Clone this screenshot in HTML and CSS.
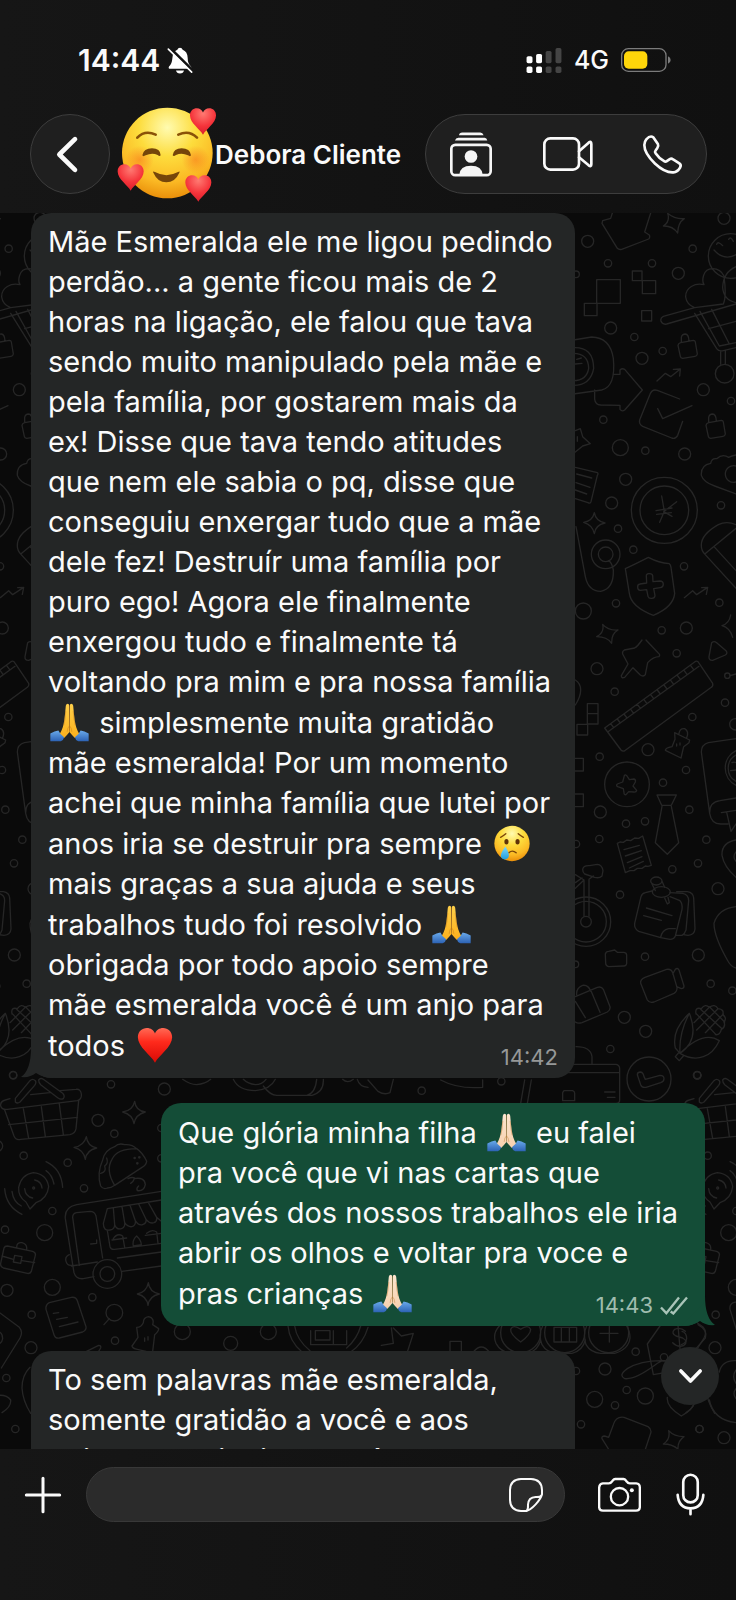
FILE: index.html
```
<!DOCTYPE html>
<html lang="pt-BR">
<head>
    <meta charset="UTF-8">
    <meta name="viewport" content="width=device-width, initial-scale=1.0">
    <title>Debora Cliente</title>
    <link rel="stylesheet" href="styles.css">
</head>
<body>
    <!-- Shared emoji symbols -->
    <svg class="sprite" aria-hidden="true">
        <defs>
            <radialGradient id="faceFill" cx="50%" cy="22%" r="80%">
                <stop offset="0" stop-color="#fffbb0"/>
                <stop offset="0.4" stop-color="#fddc3c"/>
                <stop offset="0.75" stop-color="#fbb924"/>
                <stop offset="1" stop-color="#e88b08"/>
            </radialGradient>
            <radialGradient id="blush">
                <stop offset="0" stop-color="#f97a1c" stop-opacity="0.6"/>
                <stop offset="1" stop-color="#f97a1c" stop-opacity="0"/>
            </radialGradient>
            <radialGradient id="smallHeart" cx="50%" cy="20%" r="80%">
                <stop offset="0" stop-color="#ff7a72"/>
                <stop offset="0.6" stop-color="#f5333a"/>
                <stop offset="1" stop-color="#d81f2c"/>
            </radialGradient>
            <linearGradient id="bigHeart" x1="0" y1="0" x2="0" y2="1">
                <stop offset="0" stop-color="#ff6a55"/>
                <stop offset="0.4" stop-color="#ff2a1c"/>
                <stop offset="1" stop-color="#d90a05"/>
            </linearGradient>
            <linearGradient id="handYellow" x1="0" y1="0" x2="0" y2="1">
                <stop offset="0" stop-color="#ffd04a"/>
                <stop offset="1" stop-color="#fbb01c"/>
            </linearGradient>
            <linearGradient id="handLight" x1="0" y1="0" x2="0" y2="1">
                <stop offset="0" stop-color="#fde6cf"/>
                <stop offset="1" stop-color="#f6d0ae"/>
            </linearGradient>
            <linearGradient id="sleeve" x1="0" y1="0" x2="0" y2="1">
                <stop offset="0" stop-color="#69a9ea"/>
                <stop offset="1" stop-color="#2c62b4"/>
            </linearGradient>
            <linearGradient id="tear" x1="0" y1="0" x2="0" y2="1">
                <stop offset="0" stop-color="#7fd8fb"/>
                <stop offset="1" stop-color="#1e9de0"/>
            </linearGradient>
        </defs>

        <symbol id="heart" viewBox="0 0 84 84">
            <path d="M42 82C33 65 2 46 2 23C2 9 12 1 23 1C32 1 39 6 42 14C45 6 52 1 61 1C72 1 82 9 82 23C82 46 51 65 42 82Z"/>
        </symbol>

        <symbol id="pray" viewBox="0 0 116 116">
            <path d="M47 8Q48 2 53 2Q58 3 57 10L58 86Q50 96 42 104L28 94Q34 84 38 72Q43 58 47 8Z"/>
            <path d="M69 8Q68 2 63 2Q58 3 59 10L58 86Q66 96 74 104L88 94Q82 84 78 72Q73 58 69 8Z"/>
            <path d="M58 6V84M58 68Q52 72 51 86M58 68Q64 72 65 86M47 24Q45 52 41 66M69 24Q71 52 75 66" fill="none" stroke="#b86a17" stroke-opacity="0.55" stroke-width="2"/>
            <path fill="url(#sleeve)" d="M1 91Q14 84 25 82Q30 94 42 102Q40 112 32 114H1ZM115 91Q102 84 91 82Q86 94 74 102Q76 112 84 114H115Z"/>
        </symbol>

        <symbol id="cry" viewBox="0 0 104 104">
            <circle cx="52" cy="52" r="51" fill="url(#faceFill)"/>
            <g fill="none" stroke="#7a4408" stroke-width="4" stroke-linecap="round">
                <path d="M19 34Q26 31 34 24M70 24Q78 31 85 34M43 79Q53 69 64 79"/>
            </g>
            <ellipse cx="36" cy="47" rx="6" ry="8" fill="#5e3208"/>
            <ellipse cx="68" cy="47" rx="6" ry="8" fill="#5e3208"/>
            <path fill="url(#tear)" d="M33 61Q43 78 43 87Q42 98 31 98Q20 97 20 87Q20 78 33 61Z"/>
        </symbol>

        <symbol id="loveFace" viewBox="0 0 300 288">
            <circle cx="151" cy="138" r="136" fill="url(#faceFill)"/>
            <circle cx="68" cy="158" r="42" fill="url(#blush)"/>
            <circle cx="236" cy="158" r="42" fill="url(#blush)"/>
            <g fill="none" stroke="#8a5208" stroke-width="8" stroke-linecap="round">
                <path d="M61 92Q84 68 116 83M184 83Q216 68 240 92"/>
            </g>
            <g fill="#75450a">
                <path d="M76 145Q80 124 105 124Q130 124 131 145Q128 150 122 144Q105 136 86 145Q78 150 76 145Z"/>
                <path d="M167 145Q170 124 194 124Q219 124 222 145Q220 150 213 145Q194 136 177 144Q170 150 167 145Z"/>
                <path d="M109 197Q106 191 114 195Q148 214 183 195Q190 191 187 197Q174 226 148 226Q122 226 109 197Z"/>
            </g>
            <g fill="url(#smallHeart)">
                <use href="#heart" x="217" y="3" width="82" height="82"/>
                <use href="#heart" x="0" y="171" width="82" height="82"/>
                <use href="#heart" x="203" y="204" width="82" height="82"/>
            </g>
        </symbol>
    </svg>

    <div class="app">
        <header class="header">
            <div class="status-bar">
                <div class="status-left">
                    <span class="clock">14:44</span>
                    <svg class="icon-bell" viewBox="0 0 78 80" aria-hidden="true">
                        <path fill="#fff" d="M39 2Q45 2 47 8Q61 13 62 32Q62 50 72 58Q75 63 71 65H7Q3 63 6 58Q15 50 16 34Q17 13 31 8Q33 2 39 2ZM27 70H51Q49 79 39 79Q29 79 27 70Z"/>
                        <path d="M8 2L78 71" stroke="#141414" stroke-width="9"/>
                        <path d="M4 6L74 75" stroke="#fff" stroke-width="5" stroke-linecap="round"/>
                    </svg>
                </div>
                <div class="status-right">
                    <svg class="icon-signal" viewBox="0 0 108 76" aria-hidden="true">
                        <g fill="#fff">
                            <rect x="1" y="25" width="18" height="21" rx="5"/>
                            <rect x="1" y="56" width="18" height="20" rx="5"/>
                            <rect x="30" y="18" width="18" height="28" rx="5"/>
                            <rect x="30" y="56" width="18" height="20" rx="5"/>
                        </g>
                        <g fill="#454545">
                            <rect x="59" y="9" width="18" height="37" rx="5"/>
                            <rect x="59" y="56" width="18" height="20" rx="5"/>
                            <rect x="89" y="0" width="18" height="46" rx="5"/>
                            <rect x="89" y="56" width="18" height="20" rx="5"/>
                        </g>
                    </svg>
                    <span class="network">4G</span>
                    <svg class="icon-battery" viewBox="0 0 150 72" aria-hidden="true">
                        <rect x="2" y="2" width="133" height="68" rx="20" fill="none" stroke="#7b7b7b" stroke-width="4"/>
                        <rect x="9" y="10" width="70" height="52" rx="14" fill="#ffd60a"/>
                        <path fill="#7b7b7b" d="M141 25Q149 28 149 36Q149 44 141 47Z"/>
                    </svg>
                </div>
            </div>

            <div class="contact-bar">
                <button type="button" class="back-btn" aria-label="Voltar">
                    <svg viewBox="0 0 60 104" aria-hidden="true"><path d="M54 6L7 52L54 98"/></svg>
                </button>
                <svg class="avatar" role="img" aria-label="Foto do contato"><use href="#loveFace"/></svg>
                <h1 class="contact-name">Debora Cliente</h1>
                <div class="actions">
                    <button type="button" aria-label="Contatos">
                        <svg class="icon-people" viewBox="0 0 126 134" aria-hidden="true">
                            <path fill="#f5f5f5" d="M27 9Q28 1 37 1H91Q98 1 101 9ZM15 25Q17 17 25 17H104Q110 17 112 25Z"/>
                            <rect x="4" y="38" width="118" height="91" rx="12" fill="none" stroke="#f5f5f5" stroke-width="8"/>
                            <circle cx="63" cy="73" r="19" fill="#f5f5f5"/>
                            <path fill="#f5f5f5" d="M28 128Q30 101 63 101Q96 101 98 128Z"/>
                        </svg>
                    </button>
                    <button type="button" aria-label="Chamada de vídeo">
                        <svg class="icon-video" viewBox="0 0 150 102" aria-hidden="true">
                            <rect x="4" y="4" width="104" height="94" rx="18"/>
                            <path d="M108 43L137 17Q145 11 145 21V82Q145 91 137 85L108 61"/>
                        </svg>
                    </button>
                    <button type="button" aria-label="Ligar">
                        <svg class="icon-phone" viewBox="0 0 118 118" aria-hidden="true">
                            <path d="M10 13Q22 0 31 7L45 27Q48 33 43 40L38 47Q35 51 38 55Q48 70 64 79Q68 82 72 79L81 73Q86 70 91 74L110 86Q117 91 112 99Q104 112 92 113Q67 115 36 86Q4 55 4 30Q4 20 10 13Z"/>
                        </svg>
                    </button>
                </div>
            </div>
        </header>

        <main class="chat">
            <!-- Doodle wallpaper, one tile repeated sideways -->
            <svg class="wallpaper" viewBox="0 639 2208 3708" preserveAspectRatio="xMidYMin slice" aria-hidden="true">
                <g id="doodlesTop" transform="translate(1680 600)">
                    <path d="M158 36L152 55L128 62L126 70L172 145Q177 150 185 148L266 117Q271 113 268 105L254 96L273 36"/>
                    <path d="M323 40Q344 58 373 56Q354 68 353 99Q338 77 310 78Q331 65 323 40ZM103 938Q107 963 135 969Q106 975 103 1001Q98 975 71 967Q98 963 103 938ZM128 1273Q144 1292 174 1290Q154 1301 155 1330Q141 1310 110 1310Q134 1298 128 1273ZM512 1245Q508 1270 486 1277Q510 1283 518 1312"/>
                    <circle cx="83" cy="124" r="18"/><circle cx="144" cy="190" r="11"/><circle cx="276" cy="190" r="11"/>
                    <circle cx="398" cy="146" r="11"/><circle cx="492" cy="55" r="18"/><circle cx="355" cy="220" r="18"/>
                    <circle cx="152" cy="384" r="18"/><circle cx="223" cy="411" r="11"/><circle cx="246" cy="475" r="18"/>
                    <circle cx="308" cy="453" r="11"/><circle cx="430" cy="569" r="18"/><circle cx="513" cy="603" r="11"/>
                    <circle cx="130" cy="659" r="11"/><circle cx="181" cy="743" r="24"/><circle cx="256" cy="752" r="11"/>
                    <circle cx="374" cy="762" r="18"/><circle cx="197" cy="838" r="18"/><circle cx="155" cy="909" r="18"/>
                    <circle cx="174" cy="986" r="11"/><circle cx="483" cy="916" r="11"/><circle cx="220" cy="1049" r="11"/>
                    <circle cx="372" cy="1099" r="11"/><circle cx="168" cy="1210" r="11"/><circle cx="70" cy="1233" r="24"/>
                    <circle cx="305" cy="1291" r="11"/><circle cx="379" cy="1284" r="18"/><circle cx="478" cy="1208" r="11"/>
                    <circle cx="48" cy="223" r="10"/>
                    <path d="M110 239H181V310H110ZM73 310H111V347H73ZM217 213H246V242H217ZM247 242H287V281H247ZM245 332H275V363H245Z"/>
                    <!-- ice cream cart -->
                    <circle cx="512" cy="168" r="67"/>
                    <path d="M470 133Q474 122 488 137M506 118Q512 108 520 124M462 150Q492 184 528 164"/>
                    <path d="M458 206C426 206 426 245 432 254C405 248 376 262 377 291Q380 314 404 323L490 312Q500 290 492 228Q482 207 458 206ZM528 200Q490 216 488 262Q490 300 528 308M404 323L310 349Q300 354 303 364Q308 375 320 372L528 312M404 340L470 446Q476 455 490 452L528 443M420 334L478 438L528 428M455 328L508 432M446 386L528 364M482 455V493M496 452V493"/>
                    <circle cx="494" cy="521" r="28"/>
                    <path d="M362 428L400 421Q405 421 406 426L412 462Q411 468 405 469L368 475Q362 474 361 469L354 436Q355 430 362 428ZM364 427V412Q366 402 376 402Q386 403 387 422"/>
                    <path d="M446 668L484 661Q489 661 490 666L496 702Q495 708 489 709L452 715Q446 714 445 709L438 676Q439 670 446 668ZM446 667V652Q448 642 458 642Q468 643 469 662"/>
                    <!-- camera, arrow, checkbox -->
                    <path d="M40 420L95 411Q150 412 160 475Q168 560 125 570L40 582M40 443Q100 440 101 505Q92 556 40 556M40 460Q85 460 86 505Q80 542 40 542M50 478L64 474M46 492L66 490M104 570V598Q106 614 122 615L180 616V628Q186 636 194 630L247 570L194 508Q186 504 180 510V523L160 523"/>
                    <path d="M359 597L292 571Q276 566 270 583L239 660Q236 672 248 679L335 714Q346 718 353 706L368 664M293 626L308 656L396 617"/>
                    <path d="M291 543L316 520L332 530L360 508M340 508L361 507L359 528M373 1193L398 1172L410 1184L442 1163M425 1163L443 1162L439 1183"/>
                    <path d="M46 692L61 686L68 710L91 731L68 738L46 756M52 710V724M46 802L112 818Q116 820 112 826L93 905Q90 912 84 908L46 896M50 822L95 834M48 848L90 862M46 870L80 882"/>
                    <!-- coin and shield -->
                    <circle cx="313" cy="931" r="99"/><circle cx="313" cy="931" r="73"/>
                    <path d="M305 888L313 934L350 905M313 934L299 967M288 932L336 924M290 943L334 938M311 935L336 949"/>
                    <path d="M265 1072Q297 1089 328 1091Q332 1094 333 1102L344 1180Q341 1220 280 1246Q213 1220 208 1180L196 1106Q236 1087 265 1072Z"/>
                    <path d="M259 1129Q258 1122 266 1121Q277 1120 278 1127L279 1145L300 1143Q309 1143 310 1152Q310 1162 301 1163L281 1166L285 1187Q284 1195 276 1195Q266 1196 264 1189L260 1169L241 1171Q233 1171 233 1162Q232 1153 240 1152L260 1149Z"/>
                    <path d="M48 980L76 1130Q85 1174 122 1174Q162 1166 160 1110Q155 1085 145 1082"/>
                    <circle cx="137" cy="1063" r="43"/><circle cx="137" cy="1063" r="22"/>
                    <path d="M528 765Q515 768 506 772Q488 760 470 776Q455 774 452 790Q422 795 424 826Q430 846 464 858L528 882M528 798A25 25 0 1 0 528 846"/>
                    <path d="M528 974Q500 962 475 974Q422 1004 424 1038Q424 1052 435 1063L528 1165M437 1060L528 985M462 1040L528 1112"/>
                </g>
                <g id="doodlesMiddle" transform="translate(1680 1920)">
                    <circle cx="350" cy="40" r="11"/><circle cx="111" cy="86" r="18"/><circle cx="164" cy="155" r="11"/>
                    <circle cx="397" cy="231" r="11"/><circle cx="495" cy="188" r="11"/><circle cx="264" cy="329" r="18"/>
                    <circle cx="119" cy="350" r="11"/><circle cx="378" cy="390" r="11"/><circle cx="309" cy="428" r="11"/>
                    <circle cx="121" cy="516" r="18"/><circle cx="198" cy="551" r="11"/><circle cx="255" cy="544" r="11"/>
                    <circle cx="388" cy="509" r="11"/><circle cx="118" cy="597" r="11"/><circle cx="439" cy="599" r="11"/>
                    <circle cx="414" cy="670" r="11"/><circle cx="337" cy="688" r="11"/><circle cx="180" cy="764" r="11"/>
                    <circle cx="474" cy="746" r="18"/><circle cx="255" cy="950" r="11"/><circle cx="415" cy="945" r="18"/>
                    <circle cx="452" cy="1031" r="11"/><circle cx="517" cy="1052" r="11"/><circle cx="193" cy="1132" r="18"/>
                    <circle cx="257" cy="1174" r="18"/><circle cx="151" cy="1227" r="11"/><circle cx="412" cy="1306" r="11"/>
                    <circle cx="502" cy="107" r="8"/><circle cx="526" cy="253" r="17"/><circle cx="48" cy="612" r="11"/><circle cx="46" cy="973" r="10"/>
                    <path d="M455 8Q462 2 470 8L498 32Q504 40 496 45L458 61Q446 62 447 50ZM510 107L528 102"/>
                    <!-- pins and ruler -->
                    <path d="M246 0Q232 20 224 24L193 30Q186 34 188 42L204 72L184 107Q184 116 194 112L219 83L240 104Q250 112 256 104L263 68Q280 50 297 50Q302 44 294 38L258 0"/>
                    <path d="M134 264L407 64Q413 62 416 68L458 130Q460 138 454 142L196 331Q188 336 183 330ZM144 275L417 79M152 251L161 263M172 237L181 249M192 222L201 234M212 208L221 220M232 193L241 205M252 179L261 191M272 164L281 176M292 150L301 162M312 135L321 147M332 121L341 133M352 106L361 118M372 91L381 103M392 77L401 89"/>
                    <path d="M344 278L389 300L387 308L371 320L363 354L316 331Q316 324 336 320L345 298ZM357 280Q360 264 374 266Q388 274 380 293M350 312V318M360 309V315"/>
                    <path d="M82 191H114V252H82ZM82 221H114M51 253H83V285H51ZM40 355H70V393H40ZM40 462H70V500H40ZM46 120Q62 130 62 150Q62 170 46 195"/>
                    <circle cx="201" cy="433" r="67"/>
                    <path d="M193 407Q196 402 201 408L208 419L222 417Q228 419 226 426L219 438L230 451Q229 457 221 456L206 455L198 464Q192 465 192 458L190 446L173 440Q167 436 172 432L188 426Z"/>
                    <path d="M291 465H349L334 496H305ZM306 499L286 608L322 643L356 608L334 499"/>
                    <path d="M172 610L180 606L190 607L200 600L212 602L224 594L236 595L248 588L274 676L264 679L256 678L246 685L232 685L222 692L210 692L196 698ZM192 629L238 616M196 648L244 632M202 668L246 650M208 684L250 664"/>
                    <!-- contacts book -->
                    <path d="M528 296L445 308Q424 314 424 336L449 520Q454 552 482 552H504M449 520Q448 486 480 482L528 474M484 518L528 511M500 517L513 574L528 552M528 332A58 58 0 0 0 528 436M528 345A45 45 0 0 0 528 424M516 368A12 12 0 0 1 528 390M528 390L512 392M528 600Q484 608 486 646Q492 680 528 712M528 636Q516 650 528 664M528 800Q475 806 462 850Q462 890 502 960Q512 980 528 984"/>
                    <!-- bicycle -->
                    <circle cx="78" cy="845" r="74"/><circle cx="78" cy="845" r="61"/><circle cx="78" cy="845" r="16"/>
                    <path d="M72 829V720L46 704M87 829V718L100 708M46 745L72 720M46 728L66 714M68 688Q70 676 88 677L112 673Q126 674 129 692L126 708Q118 716 104 712L74 702Q68 698 68 688Z"/>
                    <!-- sticky notes -->
                    <path d="M276 753L256 758Q246 760 243 770L224 850Q222 866 236 874L302 893L330 898Q342 898 346 888L366 808Q368 790 360 782L330 770M330 758L368 760Q386 764 386 782L378 870Q374 882 366 886L346 886M350 755H382Q400 758 401 774L405 866Q404 884 384 886L370 884M302 892Q306 870 326 866L346 866M259 804L336 827M251 827L304 841"/>
                    <ellipse cx="289" cy="723" rx="17" ry="12"/><ellipse cx="304" cy="756" rx="27" ry="16"/>
                    <path d="M276 732L286 752M306 724L314 742M314 774L322 792L328 788L324 772"/>
                    <path d="M136 942Q138 934 146 934L164 930L172 937H192Q200 938 200 946V971Q198 979 190 978L146 980Q137 978 137 970Z"/>
                    <path d="M255 1012L320 988Q334 986 338 998L351 1042Q352 1054 342 1060L282 1086Q268 1090 262 1080L242 1030Q240 1018 255 1012ZM338 1002L346 988Q352 982 357 990L372 1038Q372 1046 364 1046L350 1040"/>
                    <path d="M46 1070L112 1042Q124 1038 130 1048L150 1100Q152 1110 142 1116L66 1148Q54 1152 46 1146M46 1084L76 1133M92 1050L120 1117M50 1064Q48 1044 68 1036Q86 1034 92 1054"/>
                    <!-- corn -->
                    <path d="M388 1120Q334 1170 346 1224L360 1240Q398 1262 430 1250Q460 1240 478 1202Q430 1170 360 1240Q420 1200 388 1120ZM388 1120Q356 1180 360 1240M358 1236L346 1250L358 1262L370 1248"/>
                    <path d="M408 1122Q404 1100 424 1106Q436 1090 448 1102Q464 1090 474 1106Q494 1108 488 1124Q502 1134 492 1146Q498 1160 484 1168Q480 1186 466 1184M408 1120L468 1184M420 1106L486 1166M448 1100L494 1146M474 1106L410 1170M490 1122L436 1178M448 1102L402 1148"/>
                    <path d="M48 1220Q92 1220 96 1250V1273M10 1273H168Q179 1275 179 1286V1380Q179 1390 168 1390H8M10 1298H179M134 1356H165M142 1372H165M12 1352H38Q44 1354 44 1360V1382H8V1358Z"/>
                    <circle cx="267" cy="1317" r="66"/>
                    <path d="M232 1304Q232 1296 242 1296Q250 1298 252 1310L256 1318L300 1306Q312 1306 312 1316Q312 1324 302 1328L258 1342Q246 1344 242 1334Z"/>
                </g>
                <g id="doodlesBottom" transform="translate(0 3090)">
                    <circle cx="39" cy="135" r="11"/><circle cx="333" cy="163" r="11"/><circle cx="493" cy="177" r="18"/>
                    <circle cx="294" cy="271" r="18"/><circle cx="343" cy="311" r="11"/><circle cx="71" cy="377" r="11"/>
                    <circle cx="203" cy="398" r="11"/><circle cx="252" cy="475" r="11"/><circle cx="157" cy="543" r="11"/>
                    <circle cx="15" cy="599" r="11"/><circle cx="134" cy="608" r="24"/><circle cx="21" cy="781" r="18"/>
                    <circle cx="157" cy="772" r="24"/><circle cx="277" cy="802" r="11"/><circle cx="95" cy="854" r="11"/>
                    <circle cx="93" cy="953" r="18"/><circle cx="345" cy="932" r="11"/><circle cx="547" cy="905" r="24"/>
                    <circle cx="692" cy="940" r="21"/><circle cx="805" cy="905" r="24"/><circle cx="484" cy="294" r="11"/><circle cx="484" cy="385" r="11"/>
                    <circle cx="19" cy="1044" r="11"/><circle cx="46" cy="1197" r="11"/><circle cx="-8" cy="348" r="16"/>
                    <!-- basket -->
                    <path d="M46 205L90 152Q98 144 106 152Q110 158 104 166L60 216Q52 222 46 216ZM116 150Q122 142 130 148L188 190Q196 198 190 206Q182 210 174 204L122 164Q116 158 116 150ZM30 206L16 210Q0 214 2 228Q6 240 22 238L232 212Q246 208 244 192Q242 176 228 178L180 182M92 194L150 188M14 240L42 318Q48 332 62 328L210 314Q226 310 228 296L236 212M70 236L86 326M124 230L136 320M178 222L190 314M26 284L232 262"/>
                    <path d="M404 214Q407 242 436 246Q406 254 402 281Q398 254 368 246Q398 242 404 214ZM259 320Q262 348 290 354Q260 360 256 388Q252 360 222 352Q252 348 259 320ZM445 758Q448 786 478 792Q448 798 444 826Q440 798 412 792Q440 786 445 758Z"/>
                    <!-- taco -->
                    <path d="M322 474Q310 480 302 468Q290 430 308 390Q314 360 344 350Q356 338 374 344Q396 342 410 356Q428 368 440 394Q438 406 426 412L344 466Q334 474 322 474ZM344 466Q316 420 336 388Q350 356 410 356M302 430Q320 426 314 408Q326 400 320 384M384 446Q396 440 404 444Q400 456 392 460M402 446Q434 440 436 464Q432 484 412 482Q408 474 416 468"/>
                    <circle cx="404" cy="384" r="2"/><circle cx="412" cy="400" r="2"/><circle cx="418" cy="382" r="2"/>
                    <path d="M78 516Q54 500 56 472Q64 434 100 428Q140 432 146 470Q142 506 108 518L90 537ZM74 476Q76 500 98 504M104 450Q124 454 126 474M138 422Q156 434 162 462M138 395Q184 416 188 472M36 484Q40 516 64 528M14 476Q18 530 66 553"/>
                    <circle cx="101" cy="474" r="3"/>
                    <!-- food truck -->
                    <path d="M484 484L230 524Q192 532 196 566L222 728Q228 748 250 746L282 740M366 724L484 708M214 708L292 696M352 684L484 666M218 562Q218 550 230 548L270 544Q284 544 288 558L308 684M218 562L238 706M272 642L290 640V630M322 536L310 580Q310 604 330 600Q344 598 344 584Q350 600 364 596Q376 592 374 578Q384 592 396 590Q408 586 406 572Q416 588 428 584Q440 580 438 568Q450 582 462 578Q472 574 470 562L484 574M322 536L484 510M340 534L344 584M366 530L374 578M390 526L406 572M416 522L438 568M444 516L470 562M322 602L330 650Q334 660 344 658L484 640M340 626Q352 608 368 618L374 652M336 630L380 624M400 648Q396 630 410 618Q424 632 424 644ZM440 610Q456 596 470 606L474 640M436 616L484 610M208 674Q194 680 198 694Q202 708 216 706"/>
                    <circle cx="322" cy="732" r="43"/><circle cx="322" cy="732" r="22"/>
                    <!-- briefcase and note -->
                    <path d="M22 648L98 664Q108 668 106 676L94 724Q90 732 82 730L10 714Q0 710 2 700L12 654Q14 648 22 648ZM50 652Q50 636 66 638Q82 642 80 658M6 678L40 688M66 692L104 698M44 676L66 680L62 700L40 696Z"/>
                    <path d="M148 818L214 802Q228 800 232 812L258 890Q260 900 248 906L178 924Q166 926 162 914L138 838Q136 824 148 818ZM160 850L176 848M170 868L202 862M178 890L234 876"/>
                    <circle cx="343" cy="848" r="25"/>
                    <path d="M328 866L312 884M410 892Q424 892 430 878Q430 862 446 860Q464 864 458 884L476 896Q476 904 464 914L458 964M410 892L414 922L396 948Q398 956 412 958L438 964M434 924V934M444 920V930M252 968L296 946Q304 946 302 954L290 974M-4 846L58 892Q70 906 60 924L4 1014M-6 904Q8 908 8 926Q6 940 -8 944M90 1012Q66 1036 66 1074Q68 1112 92 1150M-4 1096Q20 1094 32 1110Q34 1130 6 1148"/>
                    <path d="M548 148Q570 164 590 164Q616 162 632 148M700 148Q716 182 766 182Q812 178 826 148M730 148Q744 162 766 164Q786 164 798 148M790 168Q810 196 830 196H936Q972 186 970 148M920 196Q946 190 950 148M1028 148Q1042 162 1060 148M1072 148Q1078 170 1104 172M864 888Q868 934 906 966M884 888Q890 930 930 962M1104 892Q1090 940 1052 966M1082 888Q1072 926 1040 954M932 902V944H1040V902M946 902H990V930H946ZM1000 902V944"/>
                </g>
                <use href="#doodlesTop" x="-2052"/>
                <use href="#doodlesMiddle" x="-2052"/>
                <use href="#doodlesBottom" x="2052"/>
                <g transform="translate(1104 3090)">
                    <circle cx="161" cy="182" r="11"/><circle cx="400" cy="154" r="11"/><circle cx="988" cy="136" r="11"/>
                    <path d="M0 150L30 184Q50 196 66 188L76 148M218 150Q270 178 344 172V150M470 150L458 220M490 150L478 220"/>
                    <path d="M70 894L76 940L40 946M76 894L100 918L136 910L118 966M246 966V934H280V966M316 966Q340 936 364 966"/>
                    <path d="M394 888Q372 912 384 940Q398 966 430 970H480Q510 962 518 930M524 888Q510 912 522 944Q536 968 566 970H612Q644 962 652 930M656 888Q644 912 654 944Q668 968 698 970H740Q782 958 786 924Q786 904 776 888"/>
                    <circle cx="458" cy="908" r="60"/><circle cx="590" cy="908" r="60"/><circle cx="722" cy="908" r="60"/>
                    <path d="M458 936Q426 912 428 898Q436 882 458 898Q480 882 488 898Q488 914 458 936ZM558 892H626V936H558ZM580 892V936M604 892V936M696 910H750M724 886V936"/>
                </g>
                <g transform="translate(1104 3930)">
                    <circle cx="803" cy="125" r="11"/><circle cx="711" cy="177" r="18"/><circle cx="624" cy="183" r="11"/>
                    <circle cx="680" cy="268" r="24"/><circle cx="776" cy="240" r="11"/><circle cx="741" cy="286" r="11"/>
                    <circle cx="832" cy="258" r="24"/><circle cx="639" cy="343" r="11"/><circle cx="995" cy="357" r="11"/>
                    <circle cx="1068" cy="383" r="18"/><circle cx="888" cy="142" r="11"/>
                    <path d="M876 48L838 102L856 194L890 188M990 44Q1020 60 1012 84L982 118M952 64Q938 50 920 58Q908 70 924 78L944 84Q962 94 948 106Q930 114 914 98M930 46L936 116"/>
                    <path d="M890 152Q820 150 778 176Q750 196 770 206Q800 210 860 166Q880 150 890 152ZM898 262Q894 290 940 318Q974 300 980 276M1104 152Q1062 150 1054 186M1024 270Q1036 330 1104 338M1104 180Q1090 200 1104 220M1104 236Q1092 250 1104 266"/>
                    <path d="M722 418L702 386Q700 378 710 378L722 382L736 344Q744 318 768 322L840 350Q852 358 848 370L832 418M902 362Q918 380 948 380Q928 394 930 418Q914 402 886 402Q908 388 902 362Z"/>
                </g>
            </svg>

            <article class="message received">
                <p>Mãe Esmeralda ele me ligou pedindo<br>
                perdão... a gente ficou mais de 2<br>
                horas na ligação, ele falou que tava<br>
                sendo muito manipulado pela mãe e<br>
                pela família, por gostarem mais da<br>
                ex! Disse que tava tendo atitudes<br>
                que nem ele sabia o pq, disse que<br>
                conseguiu enxergar tudo que a mãe<br>
                dele fez! Destruír uma família por<br>
                puro ego! Agora ele finalmente<br>
                enxergou tudo e finalmente tá<br>
                voltando pra mim e pra nossa família<br>
                <svg class="emoji yellow" role="img" aria-label="mãos em oração"><use href="#pray"/></svg> simplesmente muita gratidão<br>
                mãe esmeralda! Por um momento<br>
                achei que minha família que lutei por<br>
                anos iria se destruir pra sempre <svg class="emoji round" role="img" aria-label="rosto chorando"><use href="#cry"/></svg><br>
                mais graças a sua ajuda e seus<br>
                trabalhos tudo foi resolvido <svg class="emoji yellow" role="img" aria-label="mãos em oração"><use href="#pray"/></svg><br>
                obrigada por todo apoio sempre<br>
                mãe esmeralda você é um anjo para<br>
                todos <svg class="emoji round red" role="img" aria-label="coração vermelho"><use href="#heart"/></svg></p>
                <div class="meta"><time>14:42</time></div>
                <svg class="tail" viewBox="0 0 34 30" aria-hidden="true"><path d="M10 0Q10 22 0 29Q9 30 15 25Q22 30 34 30L12 8Z"/></svg>
            </article>

            <article class="message sent">
                <p>Que glória minha filha <svg class="emoji light" role="img" aria-label="mãos em oração"><use href="#pray"/></svg> eu falei<br>
                pra você que vi nas cartas que<br>
                através dos nossos trabalhos ele iria<br>
                abrir os olhos e voltar pra voce e<br>
                pras crianças <svg class="emoji light" role="img" aria-label="mãos em oração"><use href="#pray"/></svg></p>
                <div class="meta">
                    <time>14:43</time>
                    <svg class="icon-checks" viewBox="0 0 84 56" aria-hidden="true"><path d="M3 34L19 51L57 4M32 46L40 52L81 4"/></svg>
                </div>
                <svg class="tail" viewBox="0 0 34 30" aria-hidden="true"><path d="M24 0Q24 22 34 29Q25 30 19 25Q12 30 0 30L22 8Z"/></svg>
            </article>

            <article class="message received">
                <p>To sem palavras mãe esmeralda,<br>
                somente gratidão a você e aos<br>
                guias por te indicar você por tudo</p>
            </article>

            <button type="button" class="scroll-btn" aria-label="Ir para o fim">
                <svg viewBox="0 0 68 42" aria-hidden="true"><path d="M5 6L34 36L63 6"/></svg>
            </button>
        </main>

        <footer class="composer">
            <button type="button" aria-label="Anexar">
                <svg class="icon-plus" viewBox="0 0 108 108" aria-hidden="true"><path d="M54 4V104M4 54H104"/></svg>
            </button>
            <div class="field">
                <input type="text" aria-label="Mensagem">
                <button type="button" aria-label="Figurinhas">
                    <svg class="icon-sticker" viewBox="0 0 102 102" aria-hidden="true">
                        <path d="M36 3H66Q98 4 99 36V48Q96 62 80 79Q64 96 52 99H36Q4 98 3 66V36Q4 4 36 3ZM53 99Q58 94 57 80Q58 58 80 57Q94 58 99 50"/>
                    </svg>
                </button>
            </div>
            <button type="button" aria-label="Câmera">
                <svg class="icon-camera" viewBox="0 0 128 102" aria-hidden="true">
                    <path d="M14 16H32Q38 16 41 11L45 6Q47 3 51 3H76Q80 3 82 6L86 11Q89 16 95 16H114Q125 17 125 28V88Q124 98 114 98H14Q4 98 3 88V28Q4 17 14 16Z"/>
                    <circle cx="64" cy="56" r="26"/>
                    <circle class="dot" cx="101" cy="37" r="6"/>
                </svg>
            </button>
            <button type="button" aria-label="Gravar áudio">
                <svg class="icon-mic" viewBox="0 0 88 128" aria-hidden="true">
                    <rect x="22" y="4" width="44" height="84" rx="22"/>
                    <path d="M5 65Q8 105 44 106Q80 105 83 65M44 106V124"/>
                </svg>
            </button>
        </footer>
    </div>
</body>
</html>
```

FILE: styles.css
```
* {
    box-sizing: border-box;
}

body {
    margin: 0;
    background: #141414;
    color: #fafafa;
    font-family: Inter, "Liberation Sans", sans-serif;
}

button {
    display: flex;
    align-items: center;
    justify-content: center;
    padding: 0;
    border: none;
    background: none;
    color: inherit;
    cursor: pointer;
}

button svg {
    fill: none;
    stroke: #fafafa;
    stroke-width: 9;
    stroke-linecap: round;
    stroke-linejoin: round;
    overflow: visible;
}

.sprite {
    position: absolute;
    width: 0;
    height: 0;
}

.app {
    display: flex;
    flex-direction: column;
    height: 100vh;
}

/* Header */
.header {
    padding: 40px 29px 19px 30px;
    background: linear-gradient(90deg, #161616, #101010);
}

.status-bar {
    display: flex;
    justify-content: space-between;
    align-items: center;
    height: 40px;
    padding: 0 36px 0 48px;
    margin-bottom: 34px;
}

.status-left,
.status-right {
    display: flex;
    align-items: center;
}

.status-left {
    gap: 7px;
}

.status-right {
    gap: 12px;
}

.clock {
    font-size: 30px;
    font-weight: 600;
}

.network {
    font-size: 25px;
    font-weight: 500;
}

.icon-bell {
    width: 26px;
    height: 27px;
}

.icon-signal {
    width: 36px;
    height: 25px;
}

.icon-battery {
    width: 50px;
    height: 24px;
}

.contact-bar {
    display: flex;
    align-items: center;
    height: 80px;
}

.back-btn {
    flex: none;
    width: 80px;
    height: 80px;
    padding-right: 6px;
    border: 1px solid #3d3d3d;
    border-radius: 50%;
    background: #1f1f1f;
}

.back-btn svg {
    width: 20px;
    height: 35px;
    stroke-width: 14;
}

.avatar {
    flex: none;
    width: 100px;
    height: 96px;
    margin: 2px 0 0 7px;
}

.contact-name {
    flex: 1;
    margin: 0 0 0 -2px;
    font-size: 26px;
    font-weight: 600;
    white-space: nowrap;
}

.actions {
    display: flex;
    justify-content: space-between;
    align-items: center;
    width: 282px;
    height: 80px;
    padding: 0 24px;
    border: 1px solid #3d3d3d;
    border-radius: 40px;
    background: #1f1f1f;
}

.icon-people {
    width: 42px;
    height: 45px;
    stroke: none;
}

.icon-video {
    width: 50px;
    height: 34px;
    stroke-width: 8;
}

.icon-phone {
    width: 39px;
    height: 39px;
    stroke-width: 8;
}

/* Conversation */
.chat {
    position: relative;
    flex: 1;
    min-height: 0;
    display: flex;
    flex-direction: column;
    gap: 25px;
    padding: 0 31px;
    overflow: hidden;
    background: #0a0a0a;
}

.wallpaper {
    position: absolute;
    top: 0;
    left: 0;
    width: 100%;
    height: 100%;
    fill: none;
    stroke: #262626;
    stroke-width: 4;
    stroke-linecap: round;
    stroke-linejoin: round;
}

.message {
    position: relative;
    flex: none;
    width: 544px;
    max-width: 88%;
    padding: 9px 17px 12px;
    border-radius: 20px;
}

.message p {
    margin: 0;
    font-size: 29px;
    line-height: 40px;
    white-space: nowrap;
}

.received {
    align-self: flex-start;
    background: #242626;
}

.sent {
    align-self: flex-end;
    background: #144d37;
}

.emoji {
    width: 39px;
    height: 41px;
    margin: 0 2px;
    vertical-align: -10px;
}

.emoji.round {
    width: 36px;
    margin-left: 4px;
}

.yellow {
    fill: url(#handYellow);
}

.light {
    fill: url(#handLight);
}

.red {
    fill: url(#bigHeart);
}

.meta {
    position: absolute;
    right: 17px;
    bottom: 8px;
    display: flex;
    align-items: center;
    gap: 7px;
    color: #969898;
    font-size: 22px;
    line-height: 26px;
}

.sent .meta {
    color: #9fbcae;
}

.icon-checks {
    width: 28px;
    height: 19px;
    fill: none;
    stroke: #a9c4b8;
    stroke-width: 7;
}

.tail {
    position: absolute;
    bottom: 0;
    width: 34px;
    height: 30px;
}

.received .tail {
    left: -10px;
    fill: #242626;
}

.sent .tail {
    right: -10px;
    fill: #144d37;
}

.scroll-btn {
    position: absolute;
    right: 17px;
    bottom: 44px;
    width: 58px;
    height: 58px;
    border-radius: 50%;
    background: #242626;
}

.scroll-btn svg {
    width: 23px;
    height: 14px;
    stroke-width: 11;
}

/* Message composer */
.composer {
    display: flex;
    align-items: center;
    height: 151px;
    padding: 0 31px 60px 25px;
    background: linear-gradient(90deg, #161616, #101010);
}

.icon-plus {
    width: 36px;
    height: 36px;
}

.field {
    flex: 1;
    display: flex;
    align-items: center;
    min-width: 0;
    height: 55px;
    margin: 0 33px 0 25px;
    padding: 0 21px 0 24px;
    border: 1px solid #383838;
    border-radius: 28px;
    background: #2b2b2b;
}

.field input {
    flex: 1;
    min-width: 0;
    border: none;
    outline: none;
    background: none;
    color: inherit;
    font-family: inherit;
    font-size: 29px;
}

.icon-sticker {
    width: 34px;
    height: 34px;
    stroke-width: 6;
}

.icon-camera {
    width: 43px;
    height: 34px;
    stroke-width: 7;
}

.icon-camera .dot {
    fill: #fafafa;
    stroke: none;
}

.icon-mic {
    width: 29px;
    height: 43px;
    margin-left: 35px;
    stroke-width: 8;
}
```
